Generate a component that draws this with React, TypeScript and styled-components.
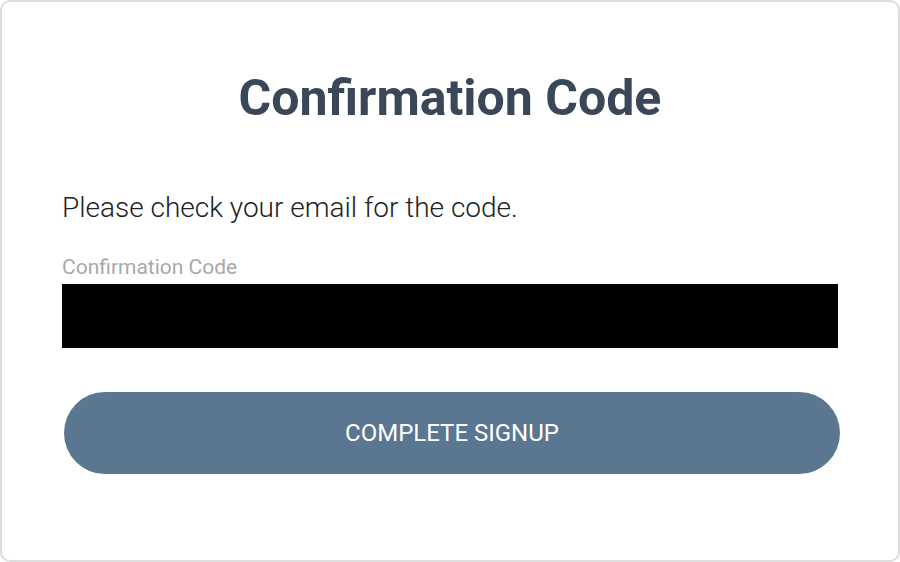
import React from "react";
import styled, { createGlobalStyle } from "styled-components";

const Global = createGlobalStyle`
  html, body { margin: 0; padding: 0; background: #ffffff; }
  body { font-family: Roboto, "Noto Sans", sans-serif; }
  * { box-sizing: border-box; }
`;

const Card = styled.div`
  width: 900px;
  height: 562px;
  border: 2px solid #dddddd;
  border-radius: 10px;
  background: #ffffff;
  padding: 0 60px;
  display: flex;
  flex-direction: column;
`;

const Title = styled.h1`
  margin: 66px 0 0;
  font-family: Roboto, sans-serif;
  font-weight: 700;
  font-size: 50px;
  line-height: 60px;
  color: #3a4759;
  text-align: center;
`;

const Lead = styled.p`
  margin: 65px 0 0;
  font-family: Roboto, sans-serif;
  font-weight: 300;
  font-size: 28px;
  line-height: 30px;
  color: #222222;
`;

const Field = styled.label`
  display: flex;
  flex-direction: column;
  margin-top: 33px;
`;

const FieldLabel = styled.span`
  font-family: Roboto, sans-serif;
  font-weight: 400;
  font-size: 21px;
  line-height: 22px;
  color: #a9a9a9;
`;

const CodeInput = styled.input`
  margin-top: 6px;
  height: 64px;
  width: 100%;
  border: none;
  background: #000000;
  outline: none;
`;

const SubmitButton = styled.button`
  margin: 44px 0 0 2px;
  height: 82px;
  width: 776px;
  border: none;
  border-radius: 41px;
  background: #5b7690;
  color: #ffffff;
  font-family: Roboto, sans-serif;
  font-weight: 400;
  font-size: 24px;
  text-transform: uppercase;
  cursor: pointer;
`;

export default function App() {
  return (
    <>
      <Global />
      <Card>
        <Title>Confirmation Code</Title>
        <Lead>Please check your email for the code.</Lead>
        <Field>
          <FieldLabel>Confirmation Code</FieldLabel>
          <CodeInput type="text" />
        </Field>
        <SubmitButton>Complete Signup</SubmitButton>
      </Card>
    </>
  );
}
